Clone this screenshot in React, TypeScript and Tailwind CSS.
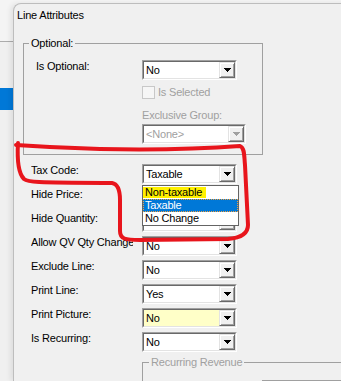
import React from "react";

function Arrow({ disabled }: { disabled?: boolean }) {
  const c = disabled ? "#a0a0a0" : "#000000";
  return (
    <svg width="7" height="4" viewBox="0 0 7 4" className="block" shapeRendering="crispEdges">
      <rect x="0" y="0" width="7" height="1" fill={c} />
      <rect x="1" y="1" width="5" height="1" fill={c} />
      <rect x="2" y="2" width="3" height="1" fill={c} />
      <rect x="3" y="3" width="1" height="1" fill={c} />
    </svg>
  );
}

function Combo({
  value,
  wide,
  yellow,
  disabled,
}: {
  value: string;
  wide?: boolean;
  yellow?: boolean;
  disabled?: boolean;
}) {
  return (
    <div
      className={
        (wide ? "w-[104px]" : "w-[95px]") +
        " h-[20px] shrink-0 border border-t-[#a0a0a0] border-l-[#a0a0a0] border-b-white border-r-white"
      }
    >
      <div
        className={
          "flex h-full border border-t-[#696969] border-l-[#696969] border-b-[#e3e3e3] border-r-[#e3e3e3] " +
          (yellow ? "bg-[#ffffc8]" : "bg-white")
        }
      >
        <div
          className={
            "flex-1 overflow-hidden whitespace-nowrap pl-[2px] leading-[16px] " +
            (disabled ? "text-[#a0a0a0]" : "text-black")
          }
        >
          {value}
        </div>
        <div className="flex w-[16px] items-center justify-center border border-t-[#e3e3e3] border-l-[#e3e3e3] border-b-[#696969] border-r-[#696969] bg-[#f0f0f0] shadow-[inset_1px_1px_0_#ffffff,inset_-1px_-1px_0_#a0a0a0]">
          <Arrow disabled={disabled} />
        </div>
      </div>
    </div>
  );
}

function Row({
  label,
  value,
  yellow,
  clip,
  children,
}: {
  label: string;
  value: string;
  yellow?: boolean;
  clip?: boolean;
  children?: React.ReactNode;
}) {
  return (
    <div className="flex h-[20px] items-start">
      <div className="w-[111px] shrink-0">
        <div
          className={
            (clip ? "w-[102px]" : "w-[111px]") +
            " overflow-hidden whitespace-nowrap leading-[13px]"
          }
        >
          {label}
        </div>
      </div>
      <div className="relative">
        <Combo value={value} yellow={yellow} />
        {children}
      </div>
    </div>
  );
}

export default function App() {
  return (
    <div className="relative flex h-[381px] w-[341px] overflow-hidden bg-[#f4f4f4] font-['Liberation_Sans',Arial,sans-serif] text-[11px] tracking-[-0.2px] text-black">
      {/* window behind */}
      <div className="flex w-[13px] shrink-0 flex-col">
        <div className="h-[42px] border-b border-[#acacac] bg-[#f4f4f4]" />
        <div className="h-[46px] bg-[#f0f0f0]" />
        <div className="h-[22px] bg-[#0078d7]" />
        <div className="flex-1 bg-[#f0f0f0]" />
      </div>

      {/* dialog */}
      <div className="mt-[3px] flex-1 rounded-tl-[8px] border-l border-t border-[#bdbdbd] bg-[#f0f0f0] shadow-[-3px_0_5px_rgba(0,0,0,0.07)]">
        <div className="pl-[3px] pt-[5px] leading-[13px]">Line Attributes</div>

        <fieldset className="ml-[9px] mt-[15px] w-[240px] border border-[#a0a0a0] pb-[10px]">
          <legend className="ml-[5px] px-[2px] leading-[13px]">Optional:</legend>
          <div className="mt-[10px] flex items-start pl-[12px]">
            <div className="w-[106px] shrink-0 leading-[13px]">Is Optional:</div>
            <Combo value="No" />
          </div>
          <div className="mt-[6px] flex items-start pl-[118px]">
            <div className="h-[13px] w-[13px] border border-[#c8c8c8] bg-[#f6f6f6]" />
            <div className="ml-[3px] leading-[13px] text-[#a0a0a0]">Is Selected</div>
          </div>
          <div className="mt-[10px] pl-[118px] leading-[13px] text-[#a0a0a0]">Exclusive Group:</div>
          <div className="mt-[2px] pl-[118px]">
            <Combo value="<None>" wide disabled />
          </div>
        </fieldset>

        <div className="mt-[9px] flex flex-col gap-[4px] pl-[17px]">
          <Row label="Tax Code:" value="Taxable">
            <div className="absolute left-0 top-[21px] z-10 w-[97px] border border-[#646464] bg-white">
              <div className="relative h-[13px] pl-[2px] leading-[13px]">
                <div className="absolute left-0 top-[1px] h-[11px] w-[63px] bg-[#fff000]" />
                <span className="relative">Non-taxable</span>
              </div>
              <div className="h-[13px] border border-dotted border-[#f0a040] bg-[#0078d7] pl-[1px] leading-[11px] text-white">
                Taxable
              </div>
              <div className="h-[13px] pl-[2px] leading-[13px]">No Change</div>
            </div>
          </Row>
          <Row label="Hide Price:" value="No" />
          <Row label="Hide Quantity:" value="No" />
          <Row label="Allow QV Qty Change:" value="No" clip />
          <Row label="Exclude Line:" value="No" />
          <Row label="Print Line:" value="Yes" />
          <Row label="Print Picture:" value="No" yellow />
          <Row label="Is Recurring:" value="No" />
        </div>

        <fieldset className="ml-[128px] mt-[4px] w-[230px] border border-[#a0a0a0] pb-[4px]">
          <legend className="ml-[6px] px-[2px] leading-[13px] text-[#a0a0a0]">Recurring Revenue</legend>
          <div className="ml-[119px] mt-[11px] h-[10px] w-[100px] border-t border-[#a0a0a0]" />
        </fieldset>
      </div>

      {/* red hand-drawn annotation */}
      <svg
        className="pointer-events-none absolute left-0 top-0 z-20"
        width="341"
        height="381"
        viewBox="0 0 341 381"
      >
        <path
          d="M18 143 C17 160 19 174 24 179 C30 184 60 182 112 183 C118 184 120 190 120 200 L120 231 C120 239 125 240 140 240 L228 239 C240 238 248 234 248 225 L245 165 C244 156 245 148 240 146 C200 149 150 150 100 149 C60 148 30 146 16 145"
          fill="none"
          stroke="#e8151c"
          strokeWidth="4"
          strokeLinecap="round"
          strokeLinejoin="round"
        />
      </svg>
    </div>
  );
}
